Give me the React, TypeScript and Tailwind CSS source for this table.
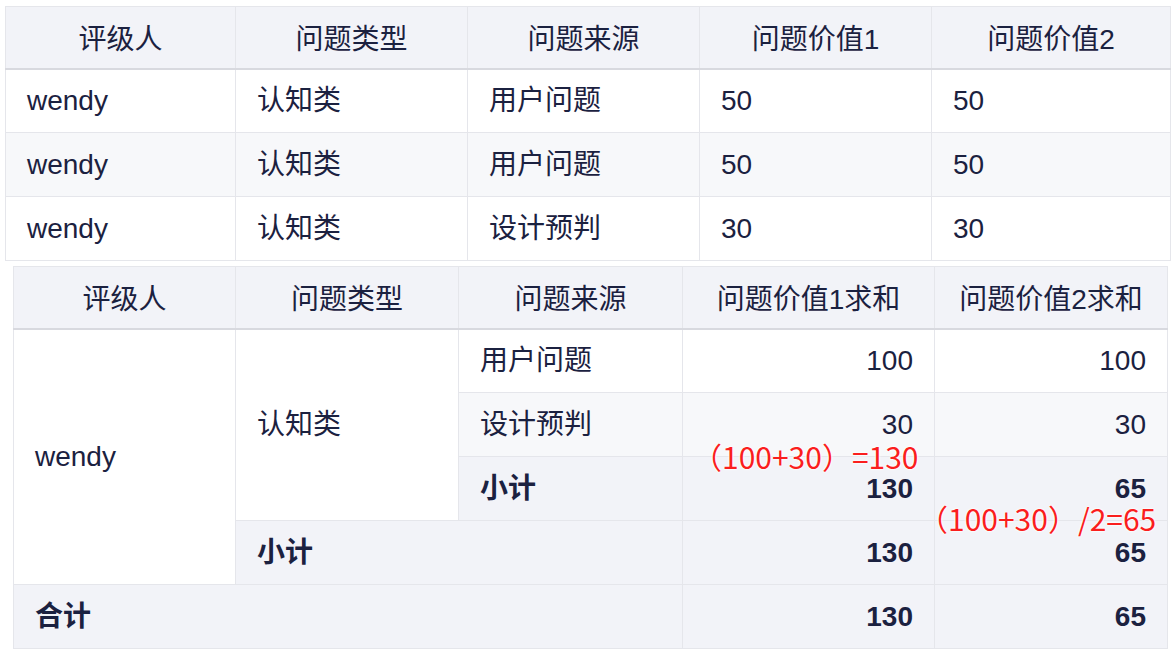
import React from "react";

const font = { fontFamily: '"Liberation Sans", "Noto Sans CJK SC", sans-serif' };

const th = "border border-[#e5e6eb] border-b-2 border-b-[#d8d9df] bg-[#f2f3f8] font-normal text-center h-[62px] pt-[5px] pb-0 px-0 align-middle";
const td = "border border-[#e5e6eb] h-[64px] px-[21px] pt-[1px] pb-0 align-middle";

const note = {
  fontFamily: '"Noto Sans CJK SC", sans-serif',
  textShadow: "0 0 2px #fff, 0 0 2px #fff, 0 0 3px #fff",
};

export default function App() {
  const rows1 = [
    ["wendy", "认知类", "用户问题", "50", "50"],
    ["wendy", "认知类", "用户问题", "50", "50"],
    ["wendy", "认知类", "设计预判", "30", "30"],
  ];
  return (
    <div className="w-[1176px] h-[660px] bg-white text-[#1b2140] text-[28px] leading-none" style={font}>
      <div className="pt-[6px] pl-[5px]">
        <table className="border-collapse table-fixed w-[1165px]">
          <colgroup>
            <col className="w-[230px]" />
            <col className="w-[232px]" />
            <col className="w-[232px]" />
            <col className="w-[232px]" />
            <col className="w-[239px]" />
          </colgroup>
          <thead>
            <tr>
              <th className={th}>评级人</th>
              <th className={th}>问题类型</th>
              <th className={th}>问题来源</th>
              <th className={th}>问题价值1</th>
              <th className={th}>问题价值2</th>
            </tr>
          </thead>
          <tbody>
            {rows1.map((r, i) => (
              <tr key={i} className={i === 1 ? "bg-[#f7f8fa]" : "bg-white"}>
                {r.map((c, j) => (
                  <td key={j} className={td}>
                    {c}
                  </td>
                ))}
              </tr>
            ))}
          </tbody>
        </table>
      </div>
      <div className="relative pt-[5px] pl-[13px]">
        <table className="border-collapse table-fixed w-[1154px]">
          <colgroup>
            <col className="w-[222px]" />
            <col className="w-[223px]" />
            <col className="w-[224px]" />
            <col className="w-[252px]" />
            <col className="w-[233px]" />
          </colgroup>
          <thead>
            <tr>
              <th className={th}>评级人</th>
              <th className={th}>问题类型</th>
              <th className={th}>问题来源</th>
              <th className={th}>问题价值1求和</th>
              <th className={th}>问题价值2求和</th>
            </tr>
          </thead>
          <tbody>
            <tr className="bg-white">
              <td className={td + " bg-white"} rowSpan={4}>wendy</td>
              <td className={td + " bg-white"} rowSpan={3}>认知类</td>
              <td className={td}>用户问题</td>
              <td className={td + " text-right"}>100</td>
              <td className={td + " text-right"}>100</td>
            </tr>
            <tr className="bg-[#f7f8fa]">
              <td className={td}>设计预判</td>
              <td className={td + " text-right"}>30</td>
              <td className={td + " text-right"}>30</td>
            </tr>
            <tr className="bg-[#f2f3f8] font-bold">
              <td className={td}>小计</td>
              <td className={td + " text-right"}>130</td>
              <td className={td + " text-right"}>65</td>
            </tr>
            <tr className="bg-[#f2f3f8] font-bold">
              <td className={td} colSpan={2}>小计</td>
              <td className={td + " text-right"}>130</td>
              <td className={td + " text-right"}>65</td>
            </tr>
            <tr className="bg-[#f2f3f8] font-bold">
              <td className={td} colSpan={3}>合计</td>
              <td className={td + " text-right"}>130</td>
              <td className={td + " text-right"}>65</td>
            </tr>
          </tbody>
        </table>
        <div className="absolute left-[692px] top-[180px] text-[#fa1e1e] text-[30px] whitespace-nowrap" style={note}>
          （100+30）=130
        </div>
        <div className="absolute left-[918px] top-[242px] text-[#fa1e1e] text-[30px] whitespace-nowrap" style={note}>
          （100+30）/2=65
        </div>
      </div>
    </div>
  );
}
